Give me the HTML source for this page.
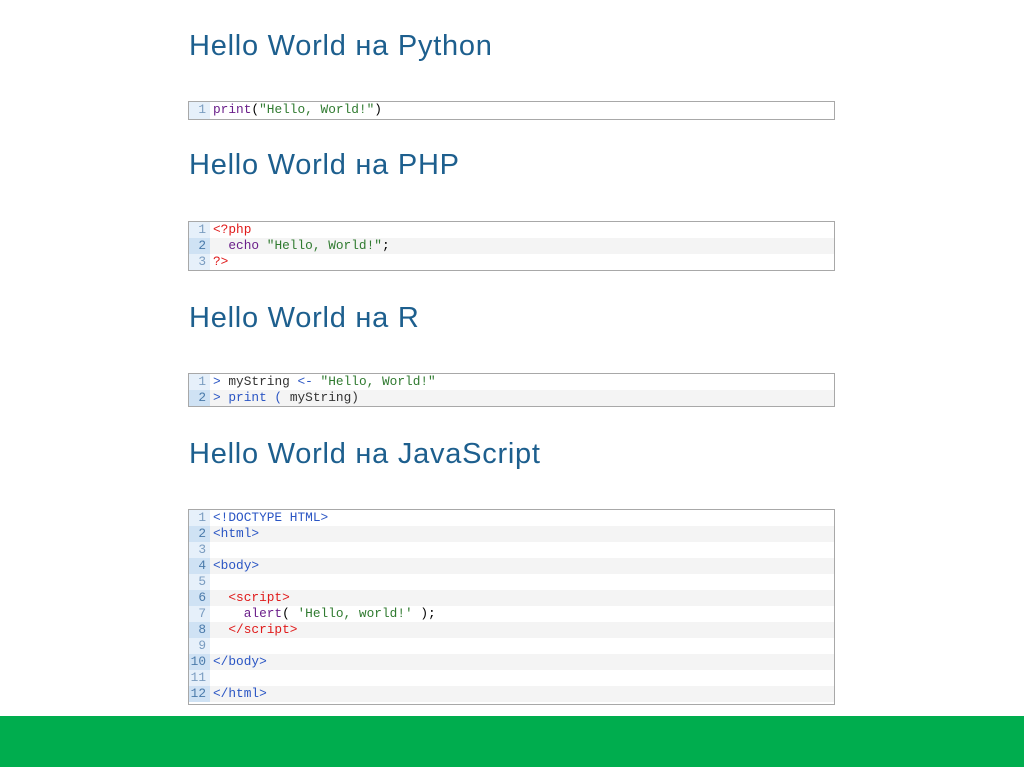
<!DOCTYPE html>
<html><head><meta charset="utf-8"><style>
body{margin:0;width:1024px;height:767px;background:#fff;position:relative;overflow:hidden;font-family:"Liberation Sans",sans-serif}
h2{position:absolute;left:189px;margin:0;font-weight:normal;font-size:29px;letter-spacing:0.75px;color:#1d5f8e;white-space:nowrap;line-height:34px}
.box{position:absolute;left:188px;width:645px;border:1px solid #a8a8a8;font-family:"Liberation Mono",monospace;font-size:12.8px}
.r{height:16px;line-height:16px;display:flex;white-space:pre}
.r .n{width:17px;text-align:right;padding-right:4px;background:#e6f0fa;color:#7a9cc0;flex:none}
.r .c{padding-left:3px;flex:1}
.r:nth-child(even) .n{background:#cfe2f4;color:#4a7aaa}
.r:nth-child(even) .c{background:#f4f4f4}
.k{color:#6b1f8a}.s{color:#2f7a2f}.t{color:#2a55c4}.red{color:#e01a1a}.p{color:#333}
.green{position:absolute;left:0;top:716px;width:1024px;height:51px;background:#00ad4e}
</style></head><body>
<h2 style="top:29px">Hello World на Python</h2>
<div class="box" style="top:101px"><div class="r" style="height:17px"><span class="n">1</span><span class="c"><span class="k">print</span>(<span class="s">"Hello, World!"</span>)</span></div></div>
<h2 style="top:148px">Hello World на PHP</h2>
<div class="box" style="top:221px"><div class="r"><span class="n">1</span><span class="c"><span class="red">&lt;?php</span></span></div><div class="r"><span class="n">2</span><span class="c">  <span class="k">echo</span> <span class="s">"Hello, World!"</span>;</span></div><div class="r"><span class="n">3</span><span class="c"><span class="red">?&gt;</span></span></div></div>
<h2 style="top:301px">Hello World на R</h2>
<div class="box" style="top:373px"><div class="r"><span class="n">1</span><span class="c"><span class="t">&gt;</span> <span class="p">myString</span> <span class="t">&lt;-</span> <span class="s">"Hello, World!"</span></span></div><div class="r"><span class="n">2</span><span class="c"><span class="t">&gt; print (</span> <span class="p">myString)</span></span></div></div>
<h2 style="top:437px">Hello World на JavaScript</h2>
<div class="box" style="top:509px;height:194px">
<div class="r"><span class="n">1</span><span class="c"><span class="t">&lt;!DOCTYPE HTML&gt;</span></span></div>
<div class="r"><span class="n">2</span><span class="c"><span class="t">&lt;html&gt;</span></span></div>
<div class="r"><span class="n">3</span><span class="c"></span></div>
<div class="r"><span class="n">4</span><span class="c"><span class="t">&lt;body&gt;</span></span></div>
<div class="r"><span class="n">5</span><span class="c"></span></div>
<div class="r"><span class="n">6</span><span class="c">  <span class="red">&lt;script&gt;</span></span></div>
<div class="r"><span class="n">7</span><span class="c">    <span class="k">alert</span>( <span class="s">'Hello, world!'</span> );</span></div>
<div class="r"><span class="n">8</span><span class="c">  <span class="red">&lt;/script&gt;</span></span></div>
<div class="r"><span class="n">9</span><span class="c"></span></div>
<div class="r"><span class="n">10</span><span class="c"><span class="t">&lt;/body&gt;</span></span></div>
<div class="r"><span class="n">11</span><span class="c"></span></div>
<div class="r"><span class="n">12</span><span class="c"><span class="t">&lt;/html&gt;</span></span></div>
</div>
<div class="green"></div>
</body></html>
